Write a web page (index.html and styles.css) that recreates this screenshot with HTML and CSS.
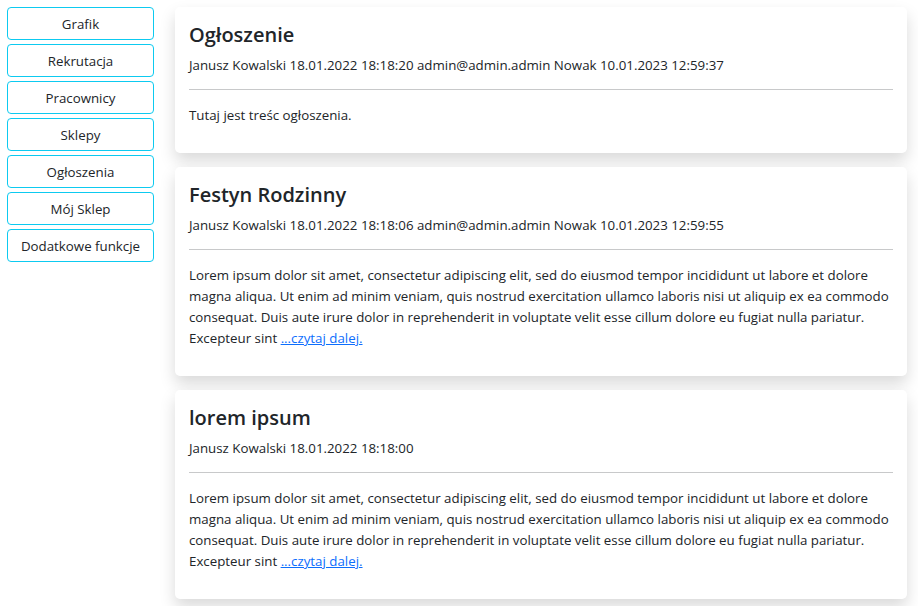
FILE: index.html
```html
<!DOCTYPE html>
<html lang="pl">
<head>
<meta charset="utf-8">
<title>Ogłoszenia</title>
<link rel="stylesheet" href="styles.css">
</head>
<body>
<div class="page">
  <nav class="sidebar">
    <button class="nav-btn">Grafik</button>
    <button class="nav-btn">Rekrutacja</button>
    <button class="nav-btn">Pracownicy</button>
    <button class="nav-btn">Sklepy</button>
    <button class="nav-btn">Ogłoszenia</button>
    <button class="nav-btn">Mój Sklep</button>
    <button class="nav-btn">Dodatkowe funkcje</button>
  </nav>
  <main class="feed">
    <article class="card">
      <h4 class="card-title">Ogłoszenie</h4>
      <p class="card-meta">Janusz Kowalski 18.01.2022 18:18:20 admin@admin.admin Nowak 10.01.2023 12:59:37</p>
      <hr class="divider">
      <p class="card-text">Tutaj jest treśc ogłoszenia.</p>
    </article>
    <article class="card">
      <h4 class="card-title">Festyn Rodzinny</h4>
      <p class="card-meta">Janusz Kowalski 18.01.2022 18:18:06 admin@admin.admin Nowak 10.01.2023 12:59:55</p>
      <hr class="divider">
      <p class="card-text">Lorem ipsum dolor sit amet, consectetur adipiscing elit, sed do eiusmod tempor incididunt ut labore et dolore magna aliqua. Ut enim ad minim veniam, quis nostrud exercitation ullamco laboris nisi ut aliquip ex ea commodo consequat. Duis aute irure dolor in reprehenderit in voluptate velit esse cillum dolore eu fugiat nulla pariatur. Excepteur sint <a href="#" class="more">...czytaj dalej.</a></p>
    </article>
    <article class="card">
      <h4 class="card-title">lorem ipsum</h4>
      <p class="card-meta">Janusz Kowalski 18.01.2022 18:18:00</p>
      <hr class="divider">
      <p class="card-text">Lorem ipsum dolor sit amet, consectetur adipiscing elit, sed do eiusmod tempor incididunt ut labore et dolore magna aliqua. Ut enim ad minim veniam, quis nostrud exercitation ullamco laboris nisi ut aliquip ex ea commodo consequat. Duis aute irure dolor in reprehenderit in voluptate velit esse cillum dolore eu fugiat nulla pariatur. Excepteur sint <a href="#" class="more">...czytaj dalej.</a></p>
    </article>
  </main>
</div>
</body>
</html>
```
FILE: styles.css
```css
html {
  overflow: hidden;
}
body {
  margin: 0;
  background: #fff;
  color: #212529;
  font-family: "Open Sans", "Noto Sans", sans-serif;
  font-size: 13.3px;
  line-height: 21px;
}
.page {
  display: flex;
  align-items: flex-start;
  gap: 21px;
  padding: 7px 11px 7px 7px;
}
.sidebar {
  width: 147px;
  flex: none;
  display: flex;
  flex-direction: column;
  gap: 4px;
}
.nav-btn {
  display: block;
  width: 100%;
  height: 33px;
  padding: 6px 6px 4px;
  margin: 0;
  background: #fff;
  border: 1px solid #0dcaf0;
  border-radius: 4px;
  color: #212529;
  font-family: inherit;
  font-size: 13.3px;
  line-height: 21px;
  text-align: center;
  cursor: pointer;
}
.feed {
  flex: 1;
  min-width: 0;
  display: flex;
  flex-direction: column;
  gap: 14px;
}
.card {
  background: #fff;
  border-radius: 5px;
  box-shadow: 0 8px 16px rgba(0, 0, 0, 0.15);
  padding: 14px 14px 13px;
}
.card-title {
  margin: 0 0 5px;
  font-size: 20px;
  line-height: 28px;
  font-weight: 600;
  color: #212529;
}
.card-meta {
  margin: 0;
  padding-top: 1px;
  line-height: 20px;
}
.divider {
  margin: 14px 0;
  border: 0;
  border-top: 1px solid #c8c9ca;
  height: 0;
}
.card-text {
  margin: 0 0 14px;
  padding-top: 1px;
}
.more {
  color: #0d6efd;
  text-decoration: underline;
}
```
